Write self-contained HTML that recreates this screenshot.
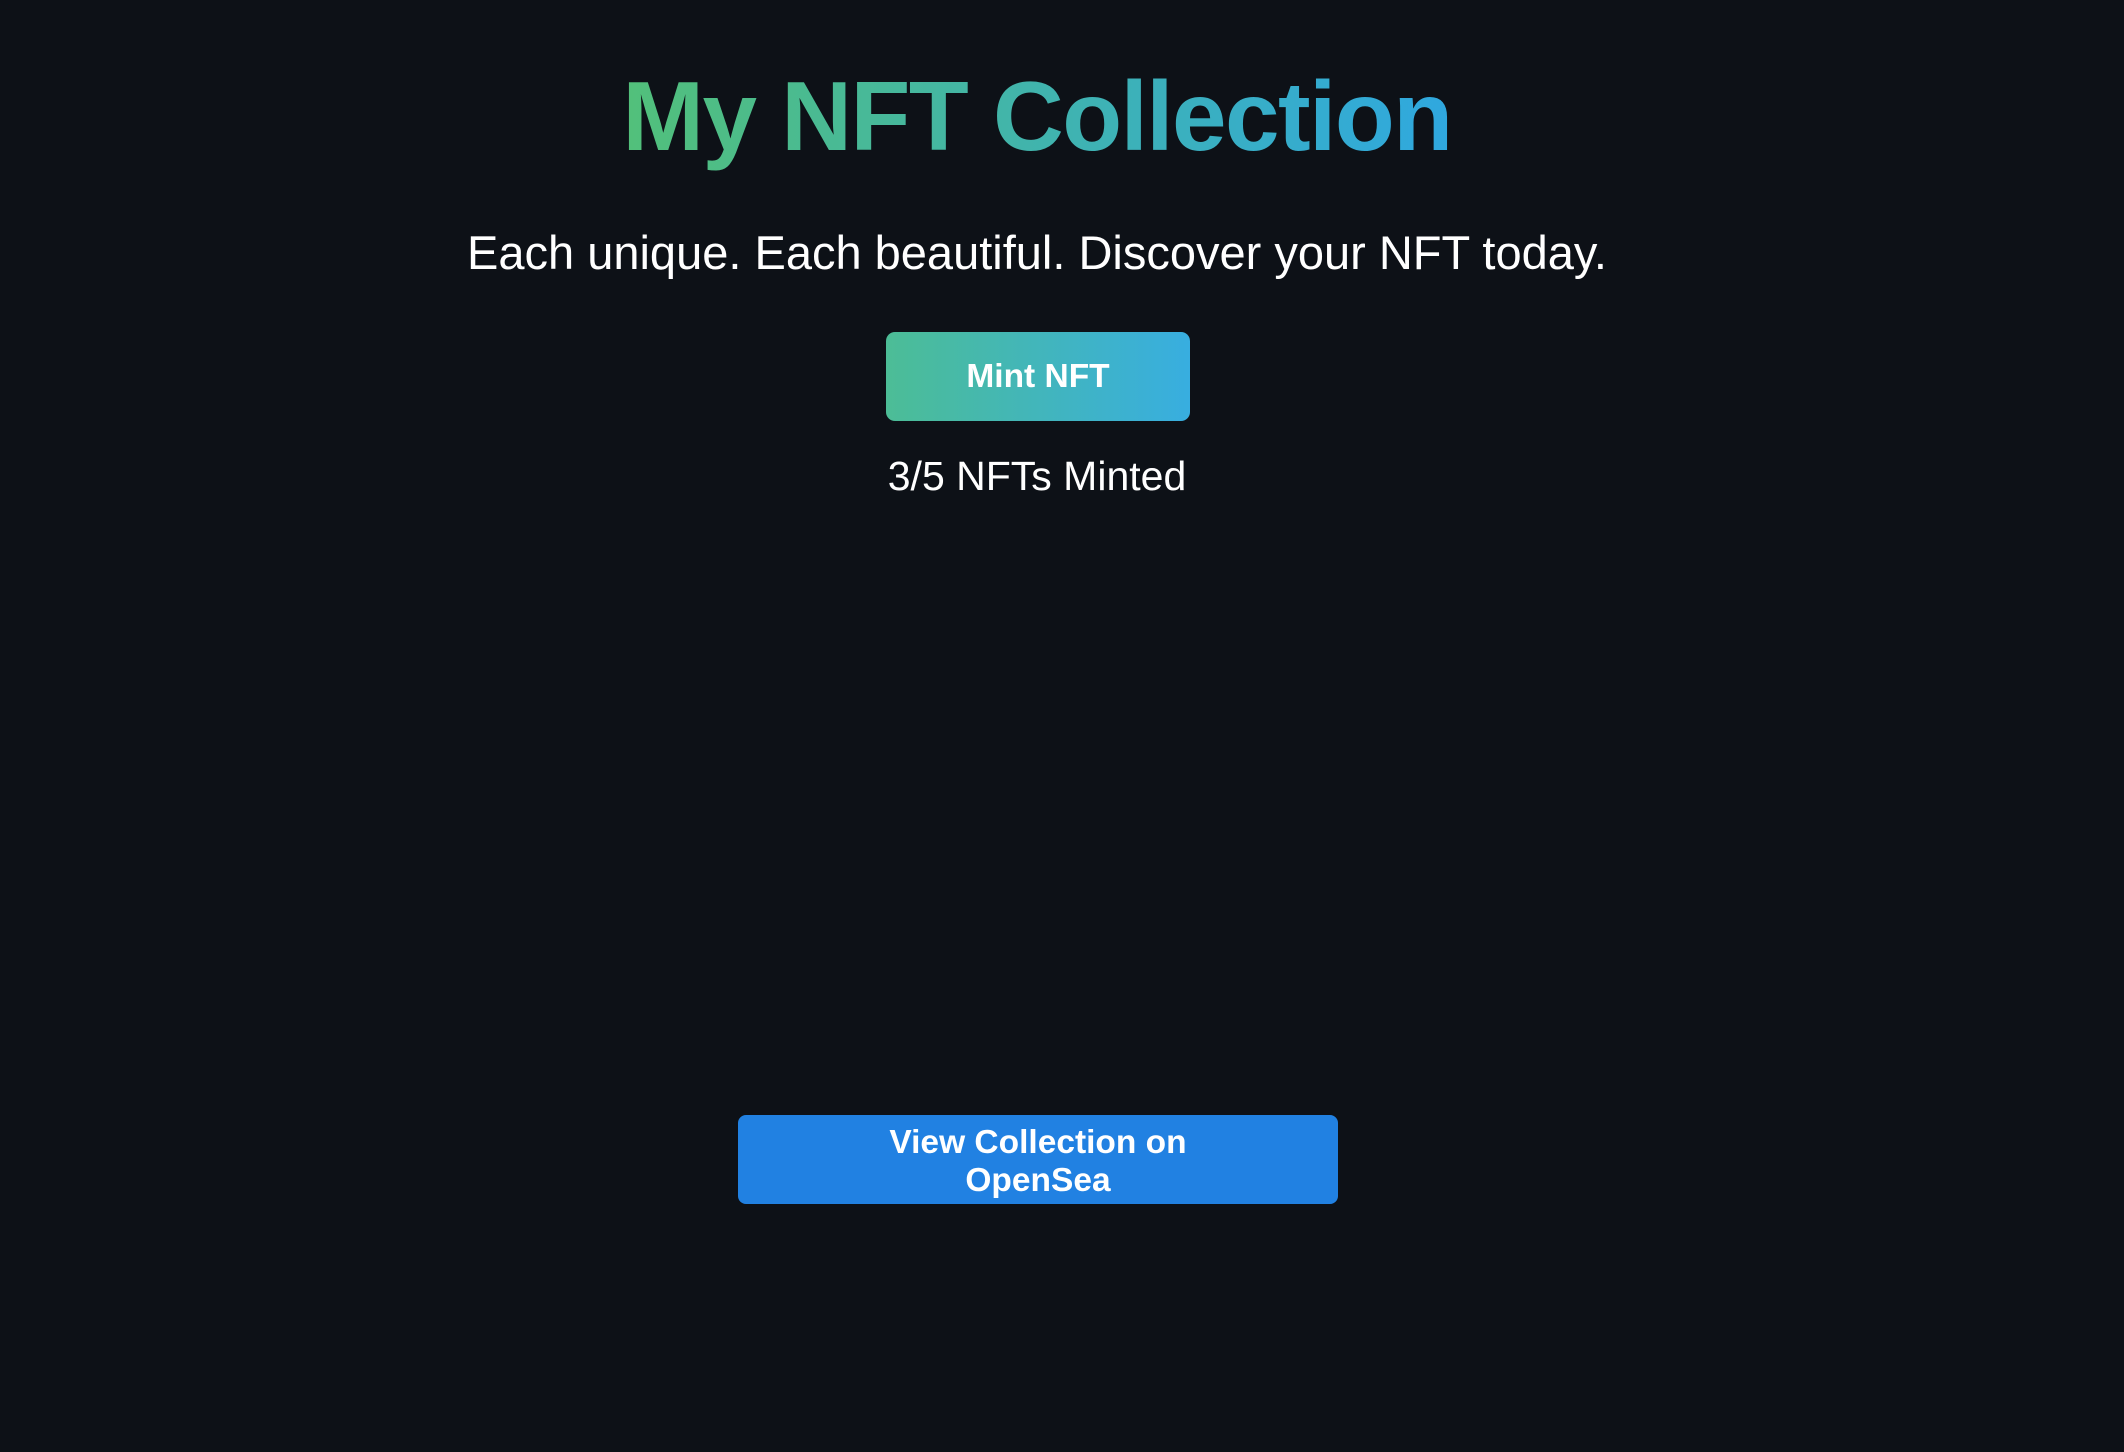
<!DOCTYPE html>
<html><head><style>
html,body{margin:0;padding:0;background:#0d1117;width:2124px;height:1452px;overflow:hidden;font-family:"Liberation Sans",sans-serif;}
.a{position:absolute;left:0;width:2074px;text-align:center;white-space:nowrap;}
h1{position:absolute;left:0;width:2074px;text-align:center;margin:0;top:56px;font-size:98px;line-height:120px;font-weight:bold;letter-spacing:-1.5px;}
h1 span{background:linear-gradient(90deg,#52c07a,#2fa8e0);-webkit-background-clip:text;background-clip:text;color:transparent;}
.sub{top:225px;font-size:47px;line-height:56px;color:#fff;}
.btn{position:absolute;left:886px;top:332px;width:304px;height:89px;border-radius:9px;background:linear-gradient(90deg,#4cbd96,#38aee0);color:#fff;font-weight:bold;font-size:33.5px;line-height:89px;text-align:center;}
.cnt{top:452px;font-size:41px;line-height:48px;color:#fff;}
.os{position:absolute;left:738px;top:1115px;width:600px;height:89px;border-radius:8px;background:#2181e2;color:#fff;font-weight:bold;font-size:33.5px;line-height:38px;text-align:center;box-sizing:border-box;padding-top:9px;}
</style></head><body>
<h1><span>My NFT Collection</span></h1>
<div class="a sub">Each unique. Each beautiful. Discover your NFT today.</div>
<div class="btn">Mint NFT</div>
<div class="a cnt">3/5 NFTs Minted</div>
<div class="os">View Collection on<br>OpenSea</div>
</body></html>
